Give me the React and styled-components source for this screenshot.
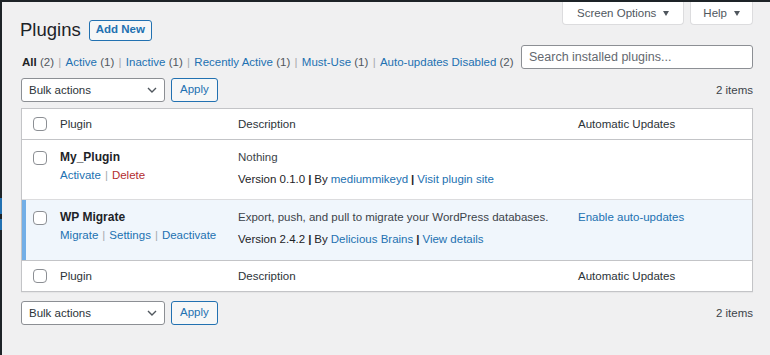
import React from "react";
import styled, { createGlobalStyle } from "styled-components";

const GlobalStyle = createGlobalStyle`
  html, body {
    margin: 0;
    padding: 0;
    background: #f0f0f1;
  }
  * {
    box-sizing: border-box;
  }
`;

const Frame = styled.div`
  width: 770px;
  height: 355px;
  display: flex;
  flex-direction: row;
  overflow: hidden;
  border-top: 2px solid #1d2327;
  background: #f0f0f1;
  font-family: "Liberation Sans", Arial, sans-serif;
  font-size: 11.5px;
  color: #3c434a;
`;

const MenuEdge = styled.div`
  width: 2px;
  flex-shrink: 0;
  background: linear-gradient(
    180deg,
    #1d2327 0px,
    #1d2327 196px,
    #2271b1 196px,
    #2271b1 212px,
    #1d2327 212px,
    #1d2327 217px,
    #2271b1 217px,
    #2271b1 228px,
    #1d2327 228px
  );
`;

const Wrap = styled.div`
  flex: 1;
  display: flex;
  flex-direction: column;
  padding: 0 17px 0 18px;
`;

const TopRow = styled.div`
  display: flex;
  flex-direction: row;
  justify-content: space-between;
  align-items: flex-start;
`;

const TitleGroup = styled.div`
  display: flex;
  flex-direction: row;
  align-items: center;
  gap: 8px;
  padding-top: 17px;
`;

const Title = styled.h1`
  margin: 0;
  font-size: 18.5px;
  font-weight: 400;
  line-height: 22px;
  color: #1d2327;
`;

const OutlineButton = styled.button`
  height: ${(p) => (p.$tall ? "24px" : "21px")};
  padding: 0 ${(p) => (p.$tall ? "8px" : "6px")};
  border: 1px solid #2271b1;
  border-radius: 3px;
  background: #f6f7f7;
  color: #2271b1;
  font-family: inherit;
  font-size: 11.5px;
  font-weight: ${(p) => (p.$bold ? 600 : 400)};
  line-height: 1;
`;

const MetaLinks = styled.div`
  display: flex;
  flex-direction: row;
  gap: 6px;
`;

const MetaTab = styled.div`
  height: 23px;
  display: flex;
  align-items: center;
  gap: 7px;
  padding: 0 ${(p) => p.$pad}px;
  background: #fff;
  border: 1px solid #dcdcde;
  border-top: none;
  border-radius: 0 0 4px 4px;
  color: #50575e;
  font-size: 11.5px;
`;

const Caret = styled.span`
  width: 0;
  height: 0;
  border-left: 3.5px solid transparent;
  border-right: 3.5px solid transparent;
  border-top: 5px solid #50575e;
`;

const FilterRow = styled.div`
  display: flex;
  flex-direction: row;
  justify-content: space-between;
  align-items: flex-end;
  margin-top: 4px;
  padding-left: 2px;
`;

const Filters = styled.div`
  display: flex;
  flex-direction: row;
  align-items: center;
  gap: 4.3px;
  line-height: 14px;
  white-space: nowrap;
`;

const FilterItem = styled.span`
  color: ${(p) => (p.$current ? "#1d2327" : "#2271b1")};
  font-weight: ${(p) => (p.$current ? 600 : 400)};
  white-space: nowrap;
`;

const Count = styled.span`
  color: #50575e;
  font-weight: 400;
`;

const Sep = styled.span`
  color: #a7aaad;
`;

const SearchBox = styled.div`
  width: 232px;
  flex-shrink: 0;
  height: 24px;
  display: flex;
  align-items: center;
  padding: 0 7px;
  background: #fff;
  border: 1px solid #8c8f94;
  border-radius: 3px;
  color: #646970;
  font-size: 12.5px;
`;

const TableNav = styled.div`
  display: flex;
  flex-direction: row;
  justify-content: space-between;
  align-items: center;
  margin-top: ${(p) => p.$top}px;
  padding-left: 1px;
`;

const Actions = styled.div`
  display: flex;
  flex-direction: row;
  gap: 6px;
`;

const Select = styled.div`
  width: 144px;
  height: 24px;
  display: flex;
  align-items: center;
  justify-content: space-between;
  padding: 0 7px 0 7px;
  background: #fff;
  border: 1px solid #8c8f94;
  border-radius: 3px;
  color: #2c3338;
  font-size: 11.5px;
`;

const Items = styled.span`
  color: #3c434a;
  font-size: 11.5px;
`;

const Table = styled.div`
  margin-top: 6px;
  margin-left: 1px;
  background: #fff;
  border: 1px solid #c3c4c7;
  box-shadow: 0 1px 1px rgba(0, 0, 0, 0.04);
`;

const Row = styled.div`
  display: grid;
  grid-template-columns: 38px 178px 340px 1fr;
  align-items: ${(p) => (p.$head ? "center" : "start")};
  height: ${(p) => (p.$head ? "31px" : "60px")};
  background: ${(p) => (p.$active ? "#f0f6fc" : "#fff")};
  box-shadow: ${(p) => (p.$active ? "inset 4px 0 0 #72aee6" : "none")};
  border-bottom: ${(p) => (p.$line ? `1px solid ${p.$line}` : "none")};
  border-top: ${(p) => (p.$topLine ? `1px solid ${p.$topLine}` : "none")};
  color: ${(p) => (p.$head ? "#2c3338" : "#3c434a")};
  line-height: 14px;
`;

const CheckCell = styled.div`
  padding-left: 11px;
  padding-top: ${(p) => (p.$head ? "0" : "11px")};
  display: flex;
`;

const Box = styled.span`
  width: 14px;
  height: 14px;
  border: 1px solid #8c8f94;
  border-radius: 4px;
  background: #fff;
`;

const Cell = styled.div`
  padding-top: ${(p) => (p.$head ? "0" : "10px")};
  display: flex;
  flex-direction: column;
`;

const Name = styled.strong`
  color: #1d2327;
  font-weight: 600;
  font-size: 12px;
`;

const RowActions = styled.div`
  margin-top: 4px;
  display: flex;
  gap: 4px;
`;

const Link = styled.span`
  color: ${(p) => (p.$danger ? "#b32d2e" : "#2271b1")};
`;

const Bar = styled.span`
  color: ${(p) => (p.$dark ? "#1d2327" : "#a7aaad")};
  font-weight: ${(p) => (p.$dark ? 600 : 400)};
`;

const Version = styled.div`
  margin-top: 8px;
  color: #1d2327;
  display: flex;
  gap: 3px;
  white-space: nowrap;
`;

const Chevron = () => (
  <svg width="10" height="6" viewBox="0 0 10 6">
    <polyline
      points="1,1 5,5 9,1"
      fill="none"
      stroke="#50575e"
      strokeWidth="1.4"
    />
  </svg>
);

const filters = [
  { label: "All", count: 2, current: true },
  { label: "Active", count: 1 },
  { label: "Inactive", count: 1 },
  { label: "Recently Active", count: 1 },
  { label: "Must-Use", count: 1 },
  { label: "Auto-updates Disabled", count: 2 },
];

const plugins = [
  {
    name: "My_Plugin",
    actions: [{ label: "Activate" }, { label: "Delete", danger: true }],
    desc: "Nothing",
    version: "0.1.0",
    author: "mediummikeyd",
    extra: "Visit plugin site",
  },
  {
    name: "WP Migrate",
    active: true,
    actions: [
      { label: "Migrate" },
      { label: "Settings" },
      { label: "Deactivate" },
    ],
    desc: "Export, push, and pull to migrate your WordPress databases.",
    version: "2.4.2",
    author: "Delicious Brains",
    extra: "View details",
    auto: "Enable auto-updates",
  },
];

const HeadRow = ({ top }) => (
  <Row $head $line={top ? "#c3c4c7" : null} $topLine={top ? null : "#c3c4c7"}>
    <CheckCell $head>
      <Box />
    </CheckCell>
    <Cell $head>Plugin</Cell>
    <Cell $head>Description</Cell>
    <Cell $head>Automatic Updates</Cell>
  </Row>
);

const Nav = ({ top }) => (
  <TableNav $top={top}>
    <Actions>
      <Select>
        Bulk actions
        <Chevron />
      </Select>
      <OutlineButton $tall>Apply</OutlineButton>
    </Actions>
    <Items>2 items</Items>
  </TableNav>
);

export default function App() {
  return (
    <>
      <GlobalStyle />
      <Frame>
        <MenuEdge />
        <Wrap>
          <TopRow>
            <TitleGroup>
              <Title>Plugins</Title>
              <OutlineButton $bold>Add New</OutlineButton>
            </TitleGroup>
            <MetaLinks>
              <MetaTab $pad={14}>
                Screen Options <Caret />
              </MetaTab>
              <MetaTab $pad={12}>
                Help <Caret />
              </MetaTab>
            </MetaLinks>
          </TopRow>

          <FilterRow>
            <Filters>
              {filters.map((f, i) => (
                <React.Fragment key={f.label}>
                  {i > 0 && <Sep>|</Sep>}
                  <FilterItem $current={f.current}>
                    {f.label} <Count>({f.count})</Count>
                  </FilterItem>
                </React.Fragment>
              ))}
            </Filters>
            <SearchBox>Search installed plugins...</SearchBox>
          </FilterRow>

          <Nav top={9} />

          <Table>
            <HeadRow top />
            {plugins.map((p, i) => (
              <Row
                key={p.name}
                $active={p.active}
                $line={i === 0 ? "#dcdcde" : null}
              >
                <CheckCell>
                  <Box />
                </CheckCell>
                <Cell>
                  <Name>{p.name}</Name>
                  <RowActions>
                    {p.actions.map((a, j) => (
                      <React.Fragment key={a.label}>
                        {j > 0 && <Bar>|</Bar>}
                        <Link $danger={a.danger}>{a.label}</Link>
                      </React.Fragment>
                    ))}
                  </RowActions>
                </Cell>
                <Cell>
                  <span>{p.desc}</span>
                  <Version>
                    <span>Version {p.version}</span>
                    <Bar $dark>|</Bar>
                    <span>By</span>
                    <Link>{p.author}</Link>
                    <Bar $dark>|</Bar>
                    <Link>{p.extra}</Link>
                  </Version>
                </Cell>
                <Cell>{p.auto && <Link>{p.auto}</Link>}</Cell>
              </Row>
            ))}
            <HeadRow />
          </Table>

          <Nav top={9} />
        </Wrap>
      </Frame>
    </>
  );
}
